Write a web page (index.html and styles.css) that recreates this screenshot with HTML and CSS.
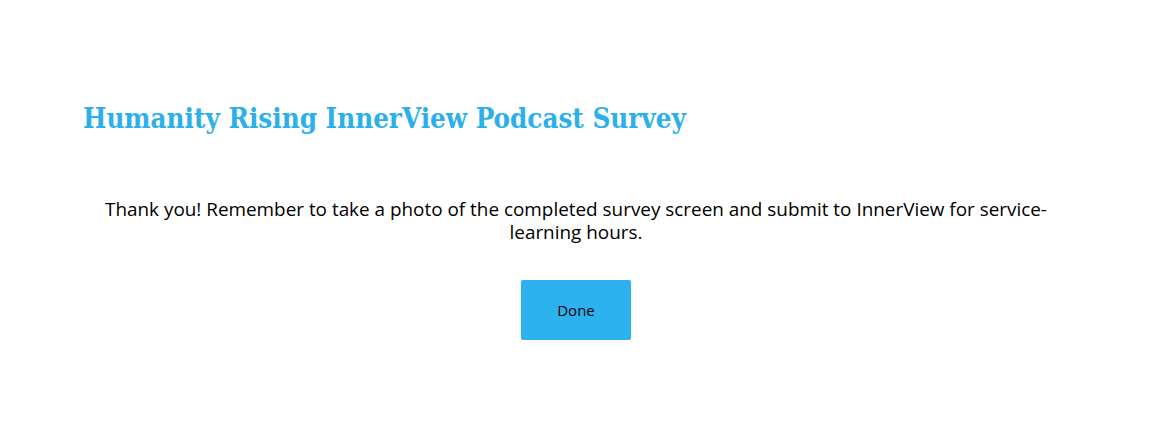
FILE: index.html
```html
<!DOCTYPE html>
<html lang="en">
<head>
    <meta charset="UTF-8">
    <meta name="viewport" content="width=device-width, initial-scale=1.0">
    <title>Humanity Rising InnerView Podcast Survey</title>
    <link rel="stylesheet" href="styles.css">
</head>
<body>
    <div class="survey">
        <!-- Survey title -->
        <h1 class="survey-title">Humanity Rising InnerView Podcast Survey</h1>

        <!-- Closing message -->
        <div class="thanks">
            <p>Thank you! Remember to take a photo of the completed survey screen and submit to InnerView for service-learning hours.</p>
            <button class="done-btn">Done</button>
        </div>
    </div>
</body>
</html>
```

FILE: styles.css
```css
body {
    margin: 0;
    font-family: "Open Sans", Arial, sans-serif;
    background: #fff;
    color: #000;
}
.survey {
    padding: 100px 80px 0 83px;
}
.survey-title {
    margin: 0;
    font-family: "DejaVu Serif Condensed", "DejaVu Serif", serif;
    font-weight: bold;
    font-size: 27.5px;
    line-height: 36px;
    color: #2bb0ea;
}
.thanks {
    margin-top: 62px;
    display: flex;
    flex-direction: column;
    align-items: center;
    text-align: center;
}
.thanks p {
    margin: 0 0 36px;
    max-width: 985px;
    font-size: 18.9px;
    line-height: 23px;
}
.done-btn {
    width: 110px;
    height: 60px;
    background-color: #2db2ef;
    border: none;
    border-radius: 2px;
    font-family: "Open Sans", Arial, sans-serif;
    font-size: 15px;
    color: #000;
    cursor: pointer;
}
```
